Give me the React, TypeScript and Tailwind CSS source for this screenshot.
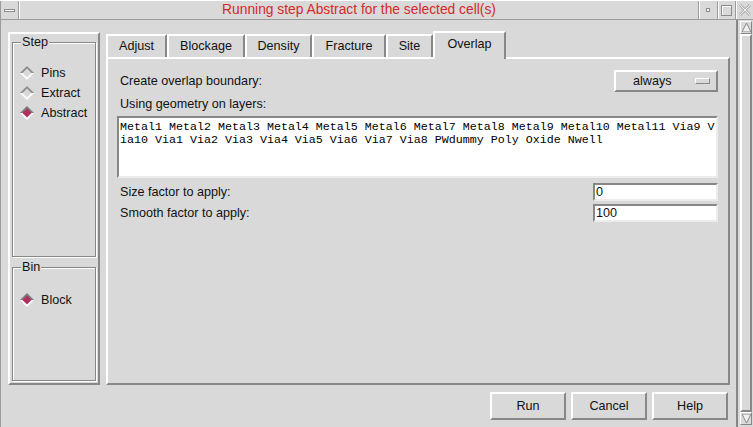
import React from 'react';

const raised = 'border-2 border-t-white border-l-white border-r-[#878787] border-b-[#878787]';
const sunken = 'border-2 border-t-[#878787] border-l-[#878787] border-r-[#ececec] border-b-[#ececec]';

const Diamond = ({ checked }: { checked?: boolean }) => (
  <svg width="14" height="14" viewBox="0 0 14 14" className="shrink-0">
    <polygon points="0,7 7,0 14,7" fill={checked ? '#7a7a7a' : '#8c8c8c'} />
    <polygon points="0,7 7,14 14,7" fill="#ffffff" />
    <polygon points="7,2.5 11.5,7 7,11.5 2.5,7" fill={checked ? '#b03060' : '#d9d9d9'} />
  </svg>
);

const Radio = ({ label, checked }: { label: string; checked?: boolean }) => (
  <div className="flex items-center h-[20px] pl-[7px] gap-[7px]">
    <Diamond checked={checked} />
    <span>{label}</span>
  </div>
);

const Group = ({ title, className, children }: { title: string; className: string; children: React.ReactNode }) => (
  <div className={`relative mx-[2px] border border-[#878787] shadow-[inset_1px_1px_0_white,1px_1px_0_white] ${className}`}>
    <span className="absolute -top-[8px] left-[8px] px-[1px] leading-[14px] bg-[#d9d9d9]">{title}</span>
    {children}
  </div>
);

const tabs = ['Adjust', 'Blockage', 'Density', 'Fracture', 'Site', 'Overlap'];
const tabWidths: Record<string, string> = {
  Adjust: 'w-[61px]',
  Blockage: 'w-[78px]',
  Density: 'w-[67px]',
  Fracture: 'w-[74px]',
  Site: 'w-[47px]',
  Overlap: 'w-[73px]',
};

const App = () => {
  return (
    <div className="w-[753px] h-[427px] bg-[#d9d9d9] overflow-hidden flex flex-col text-[12.6px] text-[#111] font-['Liberation_Sans',Arial,sans-serif]">
      {/* title bar */}
      <div className="flex h-[20px] shrink-0 border-t border-t-white border-b border-b-[#9c9c9c]">
        <div className="w-[19px] flex items-center justify-center border-r border-r-[#9c9c9c] border-l border-l-[#9c9c9c]">
          <div className="w-[11px] h-[3px] bg-white border border-[#8c8c8c]" />
        </div>
        <div className="flex-1 flex items-center justify-center text-[#d42a2a] text-[13.8px] border-l border-l-white">
          Running step Abstract for the selected cell(s)
        </div>
        <div className="w-[19px] flex items-center justify-center border-l border-l-[#9c9c9c] shadow-[inset_1px_0_0_white]">
          <div className="w-[4px] h-[4px] bg-[#f4f4f4] border border-[#8c8c8c]" />
        </div>
        <div className="w-[18px] flex items-center justify-center border-l border-l-[#9c9c9c] shadow-[inset_1px_0_0_white]">
          <div className="w-[11px] h-[11px] border border-[#8c8c8c] shadow-[inset_1px_1px_0_white]" />
        </div>
        <div className="w-[18px] flex items-center justify-center border-l border-l-[#9c9c9c] shadow-[inset_1px_0_0_white]">
          <svg width="12" height="12" viewBox="0 0 12 12">
            <path d="M1 1 L11 11 M11 1 L1 11" stroke="#b4b4b4" strokeWidth="3" />
            <path d="M1 1 L11 11 M11 1 L1 11" stroke="#efefef" strokeWidth="1" />
          </svg>
        </div>
      </div>

      <div className="flex flex-1 min-h-0">
        {/* main area */}
        <div className="flex flex-col w-[736px] border-l border-l-[#9c9c9c] pl-[7px] pt-[11px]">
          <div className="flex gap-[6px]">
            {/* left panel */}
            <div className={`${raised} w-[92px] h-[353px] mt-[1px] pt-[8px]`}>
              <Group title="Step" className="h-[215px] pt-[20px]">
                <Radio label="Pins" />
                <Radio label="Extract" />
                <Radio label="Abstract" checked />
              </Group>
              <Group title="Bin" className="h-[114px] mt-[10px] pt-[22px]">
                <Radio label="Block" checked />
              </Group>
            </div>

            {/* tabs */}
            <div className="flex flex-col w-[624px] h-[354px]">
              <div className="flex items-end h-[26px]">
                {tabs.map((t) =>
                  t === 'Overlap' ? (
                    <div
                      key={t}
                      className={`${tabWidths[t]} h-[28px] -mb-[2px] relative z-10 bg-[#d9d9d9] flex items-center justify-center pb-[3px] border-t-2 border-l-2 border-r-2 border-t-white border-l-white border-r-[#878787]`}
                    >
                      {t}
                    </div>
                  ) : (
                    <div
                      key={t}
                      className={`${tabWidths[t]} h-[23px] flex items-center justify-center border-t-2 border-l-2 border-r-2 border-t-white border-l-white border-r-[#878787]`}
                    >
                      {t}
                    </div>
                  )
                )}
              </div>
              <div className={`${raised} flex-1 pl-[9px] pr-[10px] pt-[11px]`}>
                <div className="flex items-center justify-between h-[22px]">
                  <span className="pl-[3px]">Create overlap boundary:</span>
                  <div className={`${raised} w-[104px] h-[22px] flex items-center pl-[17px]`}>
                    <span>always</span>
                    <div className="ml-auto mr-[6px] w-[15px] h-[6px] border border-t-white border-l-white border-r-[#878787] border-b-[#878787]" />
                  </div>
                </div>
                <div className="flex items-center h-[24px] pl-[3px]">Using geometry on layers:</div>
                <div className={`${sunken} h-[62px] bg-white pl-[1px] pt-[3px] font-['Liberation_Mono','DejaVu_Sans_Mono',monospace] text-[11.67px] leading-[13px] text-black whitespace-pre overflow-hidden`}>
                  <div>Metal1 Metal2 Metal3 Metal4 Metal5 Metal6 Metal7 Metal8 Metal9 Metal10 Metal11 Via9 V</div>
                  <div>ia10 Via1 Via2 Via3 Via4 Via5 Via6 Via7 Via8 PWdummy Poly Oxide Nwell</div>
                </div>
                <div className="flex items-center justify-between h-[18px] mt-[5px]">
                  <span className="pl-[3px]">Size factor to apply:</span>
                  <div className={`${sunken} w-[125px] h-[18px] bg-white flex items-center pl-[1px]`}>0</div>
                </div>
                <div className="flex items-center justify-between h-[18px] mt-[3px]">
                  <span className="pl-[3px]">Smooth factor to apply:</span>
                  <div className={`${sunken} w-[125px] h-[18px] bg-white flex items-center pl-[1px]`}>100</div>
                </div>
              </div>
            </div>
          </div>

          {/* buttons */}
          <div className="flex justify-end gap-[5px] pr-[8px] mt-[7px]">
            {['Run', 'Cancel', 'Help'].map((b) => (
              <div key={b} className={`${raised} w-[76px] h-[28px] flex items-center justify-center`}>
                {b}
              </div>
            ))}
          </div>
        </div>

        {/* scrollbar */}
        <div className="w-[17px] flex flex-col border-l-2 border-l-[#878787] pl-[2px] pr-[1px] pt-[1px] pb-[2px]">
          <div className="h-[13px] flex items-center justify-center border border-t-white border-l-white border-r-[#878787] border-b-[#878787]">
            <svg width="9" height="9" viewBox="0 0 9 9">
              <polygon points="4.5,0 9,9 0,9" fill="#f0f0f0" stroke="#888" strokeWidth="1" />
            </svg>
          </div>
          <div className="flex-1 border-2 border-t-white border-l-white border-r-[#878787] border-b-[#878787]" />
          <div className="h-[13px] flex items-center justify-center border border-t-white border-l-white border-r-[#878787] border-b-[#878787]">
            <svg width="9" height="9" viewBox="0 0 9 9">
              <polygon points="0,0 9,0 4.5,9" fill="#f0f0f0" stroke="#888" strokeWidth="1" />
            </svg>
          </div>
        </div>
      </div>
    </div>
  );
};

export default App;
